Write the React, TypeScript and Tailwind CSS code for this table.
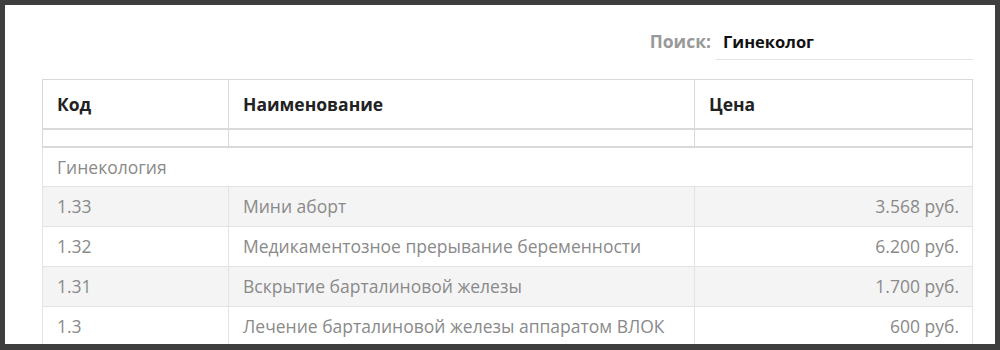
import { useState } from 'react';

type Row = { code: string; name: string; price: string };

const rows: Row[] = [
  { code: '1.33', name: 'Мини аборт', price: '3.568 руб.' },
  { code: '1.32', name: 'Медикаментозное прерывание беременности', price: '6.200 руб.' },
  { code: '1.31', name: 'Вскрытие барталиновой железы', price: '1.700 руб.' },
  { code: '1.3', name: 'Лечение барталиновой железы аппаратом ВЛОК', price: '600 руб.' },
];

export default function App() {
  const [query, setQuery] = useState('Гинеколог');

  return (
    <div className="h-[350px] w-[1000px] bg-[#3e3e3e] p-[5px] pb-[6px] font-['Open_Sans',sans-serif]">
      <div className="h-full overflow-hidden bg-white pl-[37px] pr-[22px] pt-[18px]">
        {/* Поиск */}
        <div className="flex items-center justify-end">
          <label className="mr-[5px] text-[17.5px] font-bold text-[#999]">Поиск:</label>
          <input
            value={query}
            onChange={(e) => setQuery(e.target.value)}
            className="h-[37px] w-[257px] border-b border-[#e3e3e3] px-[7px] text-[16.5px] font-bold text-[#111] outline-none"
          />
        </div>

        {/* Таблица прайса */}
        <table className="mt-[19px] w-full table-fixed border-collapse text-[17.5px]">
          <colgroup>
            <col className="w-[186px]" />
            <col className="w-[466px]" />
            <col />
          </colgroup>
          <thead>
            <tr className="h-[49px] border-b-2 border-[#d9d9d9]">
              <th className="border border-b-2 border-[#d9d9d9] px-[14px] text-left font-bold text-[#222]">Код</th>
              <th className="border border-b-2 border-[#d9d9d9] px-[14px] text-left font-bold text-[#222]">Наименование</th>
              <th className="border border-b-2 border-[#d9d9d9] px-[14px] text-left font-bold text-[#222]">Цена</th>
            </tr>
            <tr className="h-[18px]">
              <th className="border border-b-2 border-[#d9d9d9]" />
              <th className="border border-b-2 border-[#d9d9d9]" />
              <th className="border border-b-2 border-[#d9d9d9]" />
            </tr>
          </thead>
          <tbody className="text-[#8a8a8a]">
            <tr className="h-[40px]">
              <td colSpan={3} className="border border-[#e3e3e3] px-[14px]">Гинекология</td>
            </tr>
            {rows.map((r, i) => (
              <tr key={r.code} className={`h-[40px] ${i % 2 === 0 ? 'bg-[#f4f4f4]' : 'bg-white'}`}>
                <td className="border border-[#e3e3e3] px-[14px]">{r.code}</td>
                <td className="border border-[#e3e3e3] px-[14px]">{r.name}</td>
                <td className="border border-[#e3e3e3] px-[13px] text-right">{r.price}</td>
              </tr>
            ))}
          </tbody>
        </table>
      </div>
    </div>
  );
}
